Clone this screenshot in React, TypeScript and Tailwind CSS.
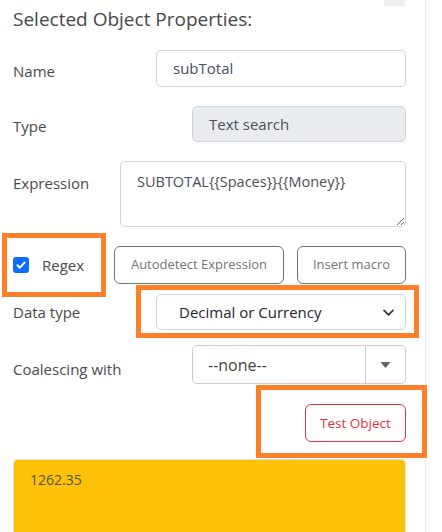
import { ReactNode } from "react";

const font = { fontFamily: '"Open Sans", "Noto Sans", sans-serif' };

function Row({ label, children, className, shift }: { label: string; children: ReactNode; className: string; shift: string }) {
  return (
    <div className={`flex items-center justify-between ${className}`}>
      <span className={`text-[15px] text-[#4a4a4a] ${shift}`}>{label}</span>
      {children}
    </div>
  );
}

export default function App() {
  return (
    <div className="w-[442px] h-[532px] bg-white overflow-hidden" style={font}>
      <div className="relative w-[426px] h-[532px] border-r border-[#ececec] pl-[13px] pr-[19px]">
        {/* leftover close button stub */}
        <div className="absolute top-0 right-[20px] w-[21px] h-[6px] bg-[#eeeeee]" />

        <h2 className="pt-[6px] text-[19px] leading-[26px] text-[#474747]">Selected Object Properties:</h2>

        <Row label="Name" className="mt-[18px]" shift="pt-[5px]">
          <div className="w-[250px] h-[37px] border border-[#ced4da] rounded-[5px] px-4 flex items-center text-[15px] text-[#495057]">
            subTotal
          </div>
        </Row>

        <Row label="Type" className="mt-[19px]" shift="pt-[4px]">
          <div className="w-[214px] h-[36px] border border-[#ced4da] bg-[#e9ecef] rounded-[5px] px-4 flex items-center text-[15px] text-[#495057]">
            Text search
          </div>
        </Row>

        <div className="mt-[19px] flex justify-between">
          <span className="pt-[11px] text-[15px] text-[#4a4a4a]">Expression</span>
          <textarea
            readOnly
            defaultValue="SUBTOTAL{{Spaces}}{{Money}}"
            className="w-[286px] h-[66px] border border-[#ced4da] rounded-[5px] px-4 pt-[9px] text-[14.5px] leading-[22px] text-[#495057] outline-none"
            style={font}
          />
        </div>

        <div className="mt-[19px] flex items-center h-[38px]">
          <div className="flex items-center gap-[13px]">
            <span className="w-4 h-4 rounded-[3px] bg-[#0d6efd] flex items-center justify-center">
              <svg viewBox="0 0 20 20" className="w-[12px] h-[12px]" fill="none" stroke="white" strokeWidth="3.2" strokeLinecap="round" strokeLinejoin="round">
                <path d="M4 10.5l4 4 8-8.5" />
              </svg>
            </span>
            <span className="text-[15px] text-[#4a4a4a]">Regex</span>
          </div>
          <div className="ml-auto flex gap-[13px]">
            <button className="w-[170px] h-[38px] border border-[#6c757d] rounded-[6px] text-[13px] text-[#6c757d]">
              Autodetect Expression
            </button>
            <button className="w-[109px] h-[38px] border border-[#6c757d] rounded-[6px] text-[13px] text-[#6c757d]">
              Insert macro
            </button>
          </div>
        </div>

        <Row label="Data type" className="mt-[10px]" shift="pt-[1px]">
          <div className="w-[250px] h-[36px] border border-[#ced4da] rounded-[5px] pl-[22px] pr-[10px] flex items-center justify-between text-[15px] text-[#212529]">
            <span>Decimal or Currency</span>
            <svg viewBox="0 0 16 16" className="w-[13px] h-[13px]" fill="none" stroke="#343a40" strokeWidth="2.2" strokeLinecap="round" strokeLinejoin="round">
              <path d="M2.5 5.5l5.5 5.5 5.5-5.5" />
            </svg>
          </div>
        </Row>

        <Row label="Coalescing with" className="mt-[15px]" shift="pt-[10px]">
          <div className="w-[214px] h-[39px] border border-[#ccc] rounded-[5px] flex items-center text-[16px] text-[#444]">
            <span className="flex-1 pl-[15px]">--none--</span>
            <span className="w-[40px] h-full border-l border-[#ccc] flex items-center justify-center">
              <svg viewBox="0 0 10 6" className="w-[11px] h-[6px]">
                <path d="M0 0h10L5 6z" fill="#666" />
              </svg>
            </span>
          </div>
        </Row>

        <div className="mt-[20px] flex justify-end">
          <button className="w-[101px] h-[38px] border border-[#dc3545] rounded-[6px] text-[13.5px] text-[#dc3545]">
            Test Object
          </button>
        </div>

        <div className="mt-[17px] h-[100px] bg-[#ffc107] border border-[#e0e0e0] border-b-0 rounded-t-[5px] px-4 pt-[9px] text-[14px] text-[#4c5545]">
          1262.35
        </div>

        {/* annotation frames */}
        <div className="absolute left-[2px] top-[233px] w-[104px] h-[64px] border-[5px] border-[#fd7f28]" />
        <div className="absolute left-[136px] top-[285px] w-[283px] h-[53px] border-[5px] border-[#fd7f28]" />
        <div className="absolute left-[256px] top-[385px] w-[171px] h-[73px] border-[5px] border-[#fd7f28]" />
      </div>
    </div>
  );
}
